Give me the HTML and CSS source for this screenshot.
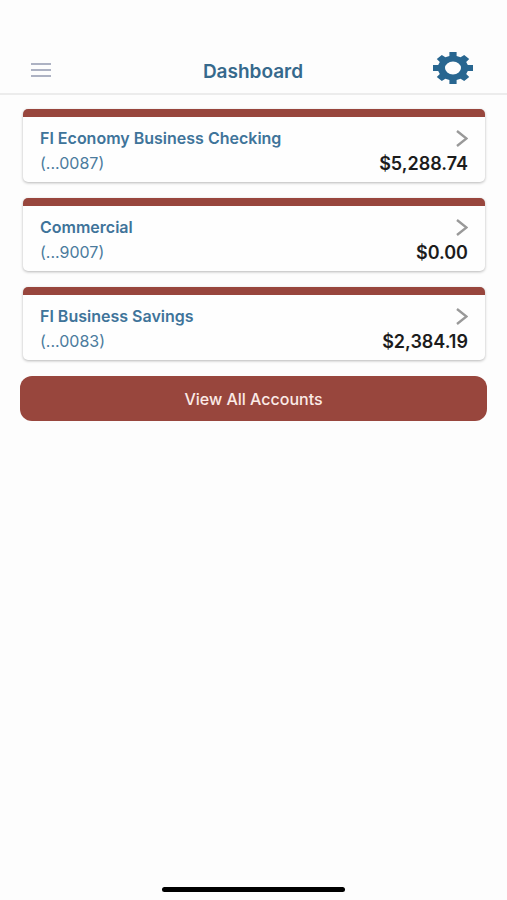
FILE: index.html
```html
<!DOCTYPE html>
<html lang="en">
<head>
<meta charset="utf-8">
<meta name="viewport" content="width=device-width, initial-scale=1">
<title>Dashboard</title>
<link rel="stylesheet" href="styles.css">
</head>
<body>
<header class="topbar">
  <button class="icon-button" type="button" aria-label="Menu">
    <svg width="20" height="16" viewBox="0 0 20 16" fill="none" stroke="#9299b0" stroke-width="1.6"><path d="M0 2h20M0 8h20M0 14h20"/></svg>
  </button>
  <h1 class="title">Dashboard</h1>
  <button class="icon-button settings" type="button" aria-label="Settings">
    <svg width="40" height="32" viewBox="-20 -20 40 40" preserveAspectRatio="none" fill="#286690">
      <path fill-rule="evenodd" d="M-3.6-20H3.6V-15L7.6-13.4L11.2-16.4L16.2-11.4L13.2-7.6L14.8-3.8H20V3.8H14.8L13.2 7.6L16.2 11.4L11.2 16.4L7.6 13.4L3.6 15V20H-3.6V15L-7.6 13.4L-11.2 16.4L-16.2 11.4L-13.2 7.6L-14.8 3.8H-20V-3.8H-14.8L-13.2-7.6L-16.2-11.4L-11.2-16.4L-7.6-13.4L-3.6-15ZM-8 0A8 8 0 1 0 8 0A8 8 0 1 0-8 0Z"/>
    </svg>
  </button>
</header>
<main class="content">
  <a class="card" href="#">
    <span class="row"><span class="name">FI Economy Business Checking</span>
      <svg class="chevron" width="12" height="18" viewBox="0 0 12 18"><path d="M1 1L10.5 8.5L1 16"/></svg></span>
    <span class="row"><span class="number">(...0087)</span><span class="balance">$5,288.74</span></span>
  </a>
  <a class="card" href="#">
    <span class="row"><span class="name">Commercial</span>
      <svg class="chevron" width="12" height="18" viewBox="0 0 12 18"><path d="M1 1L10.5 8.5L1 16"/></svg></span>
    <span class="row"><span class="number">(...9007)</span><span class="balance">$0.00</span></span>
  </a>
  <a class="card" href="#">
    <span class="row"><span class="name">FI Business Savings</span>
      <svg class="chevron" width="12" height="18" viewBox="0 0 12 18"><path d="M1 1L10.5 8.5L1 16"/></svg></span>
    <span class="row"><span class="number">(...0083)</span><span class="balance">$2,384.19</span></span>
  </a>
  <button class="view-all" type="button">View All Accounts</button>
</main>
<footer class="home"><span class="home-bar"></span></footer>
</body>
</html>
```
FILE: styles.css
```css
* {
  box-sizing: border-box;
}

body {
  display: flex;
  flex-direction: column;
  min-height: 100vh;
  margin: 0;
  background: #fdfdfd;
  font-family: Inter, "Liberation Sans", sans-serif;
}

button {
  margin: 0;
  padding: 0;
  border: 0;
  font: inherit;
  cursor: pointer;
}

svg {
  display: block;
}

.topbar {
  display: grid;
  grid-template-columns: 1fr auto 1fr;
  align-items: center;
  padding: 48px 34px 5px 31px;
  border-bottom: 2px solid #ececec;
}

.icon-button {
  justify-self: start;
  padding: 4px 0 0;
  background: none;
}

.settings {
  justify-self: end;
  padding: 0;
}

.title {
  margin: 0;
  padding: 8px 0 0 2px;
  color: #36698c;
  font-size: 19px;
  font-weight: 600;
  line-height: 32px;
}

.content {
  display: flex;
  flex-direction: column;
  gap: 16px;
  padding: 14px 20px;
}

.card {
  display: block;
  margin: 0 2px 0 3px;
  padding: 9px 17px 6px;
  border-top: 8px solid #98463d;
  border-radius: 5px;
  background: #fefefe;
  box-shadow: 0 1px 3px rgba(0, 0, 0, 0.28);
  text-decoration: none;
}

.row {
  display: flex;
  justify-content: space-between;
  align-items: center;
  line-height: 25px;
}

.name {
  color: #3f749a;
  font-size: 16px;
  font-weight: 600;
}

.number {
  color: #4b7b9d;
  font-size: 16px;
}

.balance {
  color: #1c1c1c;
  font-size: 18px;
  font-weight: 600;
}

.chevron {
  fill: none;
  stroke: #999;
  stroke-width: 2.4;
}

.view-all {
  height: 45px;
  border-radius: 12px;
  background: #98463d;
  color: #fbeae6;
  font-size: 16px;
  font-weight: 500;
}

.home {
  display: flex;
  justify-content: center;
  margin-top: auto;
  padding-bottom: 8px;
}

.home-bar {
  width: 36%;
  height: 5px;
  border-radius: 3px;
  background: #000;
}
```
